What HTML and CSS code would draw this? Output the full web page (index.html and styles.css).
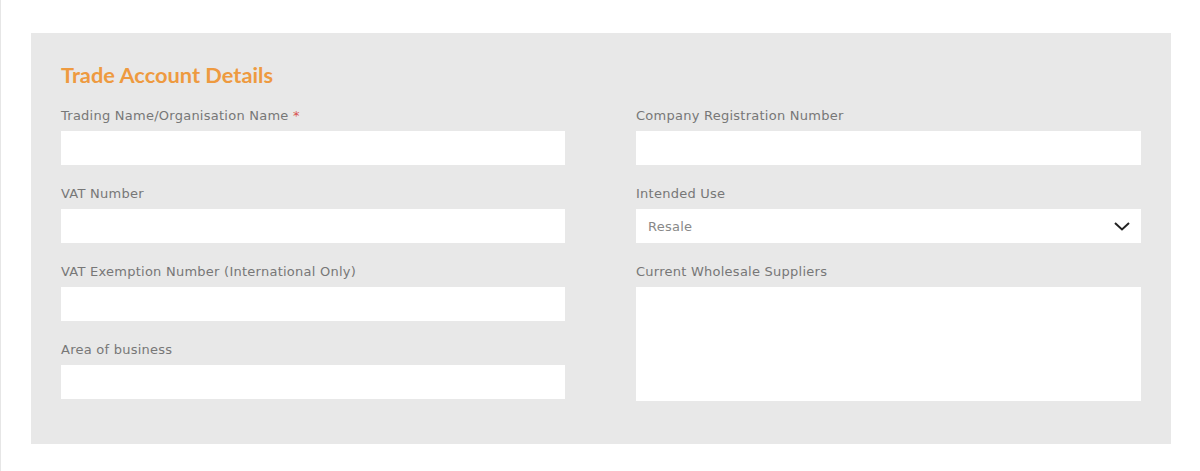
FILE: index.html
```html
<!DOCTYPE html>
<html>
<head>
<meta charset="utf-8">
<link rel="stylesheet" href="styles.css">
</head>
<body>
<div class="page">
  <section class="panel">
    <h2 class="panel-title">Trade Account Details</h2>
    <div class="cols">
      <div class="col">
        <div class="field">
          <label class="label">Trading Name/Organisation Name <span class="req">*</span></label>
          <div class="input"></div>
        </div>
        <div class="field">
          <label class="label">VAT Number</label>
          <div class="input"></div>
        </div>
        <div class="field">
          <label class="label">VAT Exemption Number (International Only)</label>
          <div class="input"></div>
        </div>
        <div class="field">
          <label class="label">Area of business</label>
          <div class="input"></div>
        </div>
      </div>
      <div class="col">
        <div class="field">
          <label class="label">Company Registration Number</label>
          <div class="input"></div>
        </div>
        <div class="field">
          <label class="label">Intended Use</label>
          <div class="input select">
            <span class="select-value">Resale</span>
            <svg class="chevron" width="18" height="12" viewBox="0 0 18 12"><path d="M2 3 L9 9.5 L16 3" fill="none" stroke="#222" stroke-width="2"/></svg>
          </div>
        </div>
        <div class="field">
          <label class="label">Current Wholesale Suppliers</label>
          <div class="input textarea"></div>
        </div>
      </div>
    </div>
  </section>
</div>
</body>
</html>
```
FILE: styles.css
```css
html, body {
  margin: 0;
  padding: 0;
  background: #fff;
}
.page {
  border-left: 1px solid #e6e6e6;
  min-height: 471px;
  box-sizing: border-box;
  padding: 33px 0 0 30px;
}
.panel {
  width: 1140px;
  box-sizing: border-box;
  background: #e8e8e8;
  padding: 29px 30px 43px 30px;
}
.panel-title {
  margin: 0 0 17px 0;
  font-family: Lato, "Open Sans", sans-serif;
  font-weight: 700;
  font-size: 21.8px;
  line-height: 26px;
  color: #ee9a40;
}
.cols {
  display: flex;
  gap: 71px;
}
.col {
  display: flex;
  flex-direction: column;
  gap: 18px;
  width: 504px;
}
.col + .col {
  width: 505px;
}
.field {
  display: flex;
  flex-direction: column;
}
.label {
  font-family: "DejaVu Sans", Verdana, sans-serif;
  font-size: 13px;
  letter-spacing: 0.25px;
  line-height: 20px;
  color: #777;
  padding-top: 1px;
  margin-bottom: 5px;
}
.req {
  color: #d9534f;
}
.input {
  height: 34px;
  background: #fff;
}
.select {
  display: flex;
  align-items: center;
  justify-content: space-between;
  padding: 0 10px 0 12px;
}
.select-value {
  font-family: "DejaVu Sans", Verdana, sans-serif;
  font-size: 13px;
  letter-spacing: 0.25px;
  color: #888;
}
.textarea {
  height: 114px;
}
```
